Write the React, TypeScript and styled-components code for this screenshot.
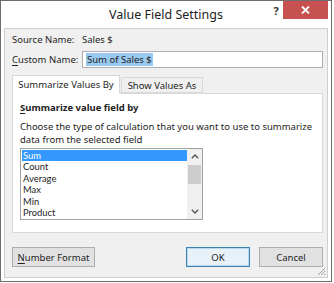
import styled, { createGlobalStyle } from 'styled-components'

const GlobalStyle = createGlobalStyle`
  html, body {
    margin: 0;
    padding: 0;
    background: #ffffff;
  }
  body {
    font-family: "Noto Sans", "Open Sans", sans-serif;
    font-size: 9.5px;
    color: #1e1e1e;
  }
`

const Frame = styled.div`
  width: 332px;
  height: 282px;
  box-sizing: border-box;
  border: 1px solid #6d6d6d;
  background: #ffffff;
  display: flex;
  flex-direction: column;
  padding: 0 3px 3px 3px;
`

const TitleBar = styled.div`
  height: 27px;
  display: grid;
  grid-template-columns: 1fr auto 1fr;
  align-items: start;
  margin: 0 -3px;
`

const Title = styled.div`
  grid-column: 2;
  font-size: 12.5px;
  line-height: 27px;
  color: #222;
`

const Controls = styled.div`
  grid-column: 3;
  justify-self: end;
  display: flex;
  align-items: flex-start;
  padding-right: 3px;
`

const HelpButton = styled.div`
  width: 12px;
  margin-right: 1px;
  font-size: 11px;
  font-weight: bold;
  line-height: 20px;
  text-align: center;
  color: #333;
`

const CloseButton = styled.div`
  width: 45px;
  height: 18px;
  background: #c75050;
  display: flex;
  align-items: center;
  justify-content: center;
`

const Client = styled.div`
  flex: 1;
  background: #f0f0f0;
  border: 1px solid #cfcfcf;
  display: flex;
  flex-direction: column;
  padding: 4px 4px 0 7px;
  position: relative;
`

const FieldRow = styled.div<{ $top?: number }>`
  display: flex;
  align-items: center;
  margin-top: ${(p) => p.$top ?? 0}px;
`

const Label = styled.div`
  width: 70px;
  line-height: 14px;
  white-space: nowrap;
`

const Value = styled.div`
  line-height: 14px;
`

const Key = styled.span`
  text-decoration: underline;
  text-underline-offset: 1.5px;
`

const TextBox = styled.div`
  flex: 1;
  height: 17px;
  box-sizing: border-box;
  border: 1px solid #abadb3;
  background: #ffffff;
  display: flex;
  align-items: center;
  padding-left: 3px;
`

const Selected = styled.span`
  background: #99c9ef;
  line-height: 13px;
  padding: 0 1px;
`

const Tabs = styled.div`
  margin-top: 7px;
  display: flex;
  flex-direction: column;
`

const TabStrip = styled.div`
  display: flex;
  align-items: flex-end;
  height: 18px;
  position: relative;
  z-index: 1;
`

const Tab = styled.div<{ $active?: boolean; $width: number }>`
  width: ${(p) => p.$width}px;
  box-sizing: border-box;
  height: ${(p) => (p.$active ? 19 : 16)}px;
  margin-bottom: ${(p) => (p.$active ? -1 : 0)}px;
  border: 1px solid #d9d9d9;
  border-bottom: ${(p) => (p.$active ? 'none' : '1px solid #d9d9d9')};
  background: ${(p) => (p.$active ? '#ffffff' : '#f0f0f0')};
  margin-right: 1px;
  display: flex;
  align-items: center;
  justify-content: center;
  padding-bottom: ${(p) => (p.$active ? 2 : 0)}px;
  white-space: nowrap;
`

const Panel = styled.div`
  height: 140px;
  box-sizing: border-box;
  border: 1px solid #d9d9d9;
  background: #ffffff;
  padding: 7px 7px 0 7px;
  display: flex;
  flex-direction: column;
`

const Heading = styled.div`
  font-weight: bold;
  line-height: 14px;
`

const Hint = styled.div`
  margin-top: 5px;
  line-height: 13px;
`

const ListBox = styled.div`
  margin-top: 2px;
  width: 183px;
  height: 72px;
  box-sizing: border-box;
  border: 1px solid #a0a0a0;
  background: #ffffff;
  display: flex;
  padding: 1px;
  overflow: hidden;
`

const Items = styled.div`
  flex: 1;
  display: flex;
  flex-direction: column;
`

const Item = styled.div<{ $selected?: boolean }>`
  flex: none;
  height: 11.4px;
  font-family: Lato, "Noto Sans", sans-serif;
  font-size: 9.4px;
  line-height: 11.4px;
  padding-left: 1px;
  background: ${(p) => (p.$selected ? '#3399ff' : 'transparent')};
  color: ${(p) => (p.$selected ? '#ffffff' : '#1e1e1e')};
`

const ScrollBar = styled.div`
  width: 15px;
  background: #f0f0f0;
  display: flex;
  flex-direction: column;
  align-items: center;
  margin: -1px -1px -1px 0;
`

const Arrow = styled.div`
  height: 15px;
  width: 15px;
  display: flex;
  align-items: center;
  justify-content: center;
`

const Track = styled.div`
  flex: 1;
  width: 100%;
  display: flex;
  flex-direction: column;
`

const Thumb = styled.div`
  height: 19px;
  margin: 1px 1px 0 1px;
  background: #cdcdcd;
`

const ButtonRow = styled.div`
  margin-top: 14px;
  display: flex;
  align-items: center;
`

const Spacer = styled.div`
  flex: 1;
`

const Button = styled.div<{ $width: number; $default?: boolean }>`
  width: ${(p) => p.$width}px;
  height: 20px;
  box-sizing: border-box;
  border: 1px solid ${(p) => (p.$default ? '#3c7fb1' : '#adadad')};
  box-shadow: ${(p) => (p.$default ? 'inset 0 0 0 1px #b9d8f1' : 'none')};
  background: ${(p) => (p.$default ? '#e9f1f8' : '#e1e1e1')};
  display: flex;
  align-items: center;
  justify-content: center;
  margin-left: ${(p) => (p.$default ? 0 : 9)}px;
  &:first-child {
    margin-left: 0;
  }
`

const Grip = styled.svg`
  position: absolute;
  right: 1px;
  bottom: 1px;
`

const items = ['Sum', 'Count', 'Average', 'Max', 'Min', 'Product']

export default function App() {
  return (
    <>
      <GlobalStyle />
      <Frame>
        <TitleBar>
          <Title>Value Field Settings</Title>
          <Controls>
            <HelpButton>?</HelpButton>
            <CloseButton>
              <svg width="9" height="8" viewBox="0 0 9 8">
                <path d="M1 0.5 L8 7.5 M8 0.5 L1 7.5" stroke="#ffffff" strokeWidth="1.8" />
              </svg>
            </CloseButton>
          </Controls>
        </TitleBar>
        <Client>
          <FieldRow>
            <Label>Source Name:</Label>
            <Value>Sales $</Value>
          </FieldRow>
          <FieldRow $top={4}>
            <Label>
              <Key>C</Key>ustom Name:
            </Label>
            <TextBox>
              <Selected>Sum of Sales $</Selected>
            </TextBox>
          </FieldRow>
          <Tabs>
            <TabStrip>
              <Tab $active $width={108}>Summarize Values By</Tab>
              <Tab $width={82}>Show Values As</Tab>
            </TabStrip>
            <Panel>
              <Heading>
                <Key>S</Key>ummarize value field by
              </Heading>
              <Hint>
                Choose the type of calculation that you want to use to summarize
                <br />
                data from the selected field
              </Hint>
              <ListBox>
                <Items>
                  {items.map((it, i) => (
                    <Item key={it} $selected={i === 0}>
                      {it}
                    </Item>
                  ))}
                </Items>
                <ScrollBar>
                  <Arrow>
                    <svg width="8" height="5" viewBox="0 0 8 5">
                      <path d="M0.8 4.2 L4 1 L7.2 4.2" fill="none" stroke="#555" strokeWidth="1.4" />
                    </svg>
                  </Arrow>
                  <Track>
                    <Thumb />
                  </Track>
                  <Arrow>
                    <svg width="8" height="5" viewBox="0 0 8 5">
                      <path d="M0.8 0.8 L4 4 L7.2 0.8" fill="none" stroke="#555" strokeWidth="1.4" />
                    </svg>
                  </Arrow>
                </ScrollBar>
              </ListBox>
            </Panel>
          </Tabs>
          <ButtonRow>
            <Button $width={83}>
              <span>
                <Key>N</Key>umber Format
              </span>
            </Button>
            <Spacer />
            <Button $width={64} $default>
              OK
            </Button>
            <Button $width={64}>Cancel</Button>
          </ButtonRow>
          <Grip width="10" height="10" viewBox="0 0 10 10">
            <path d="M9 2 L2 9 M9 5 L5 9 M9 8 L8 9" stroke="#a0a0a0" strokeWidth="1" />
          </Grip>
        </Client>
      </Frame>
    </>
  )
}
